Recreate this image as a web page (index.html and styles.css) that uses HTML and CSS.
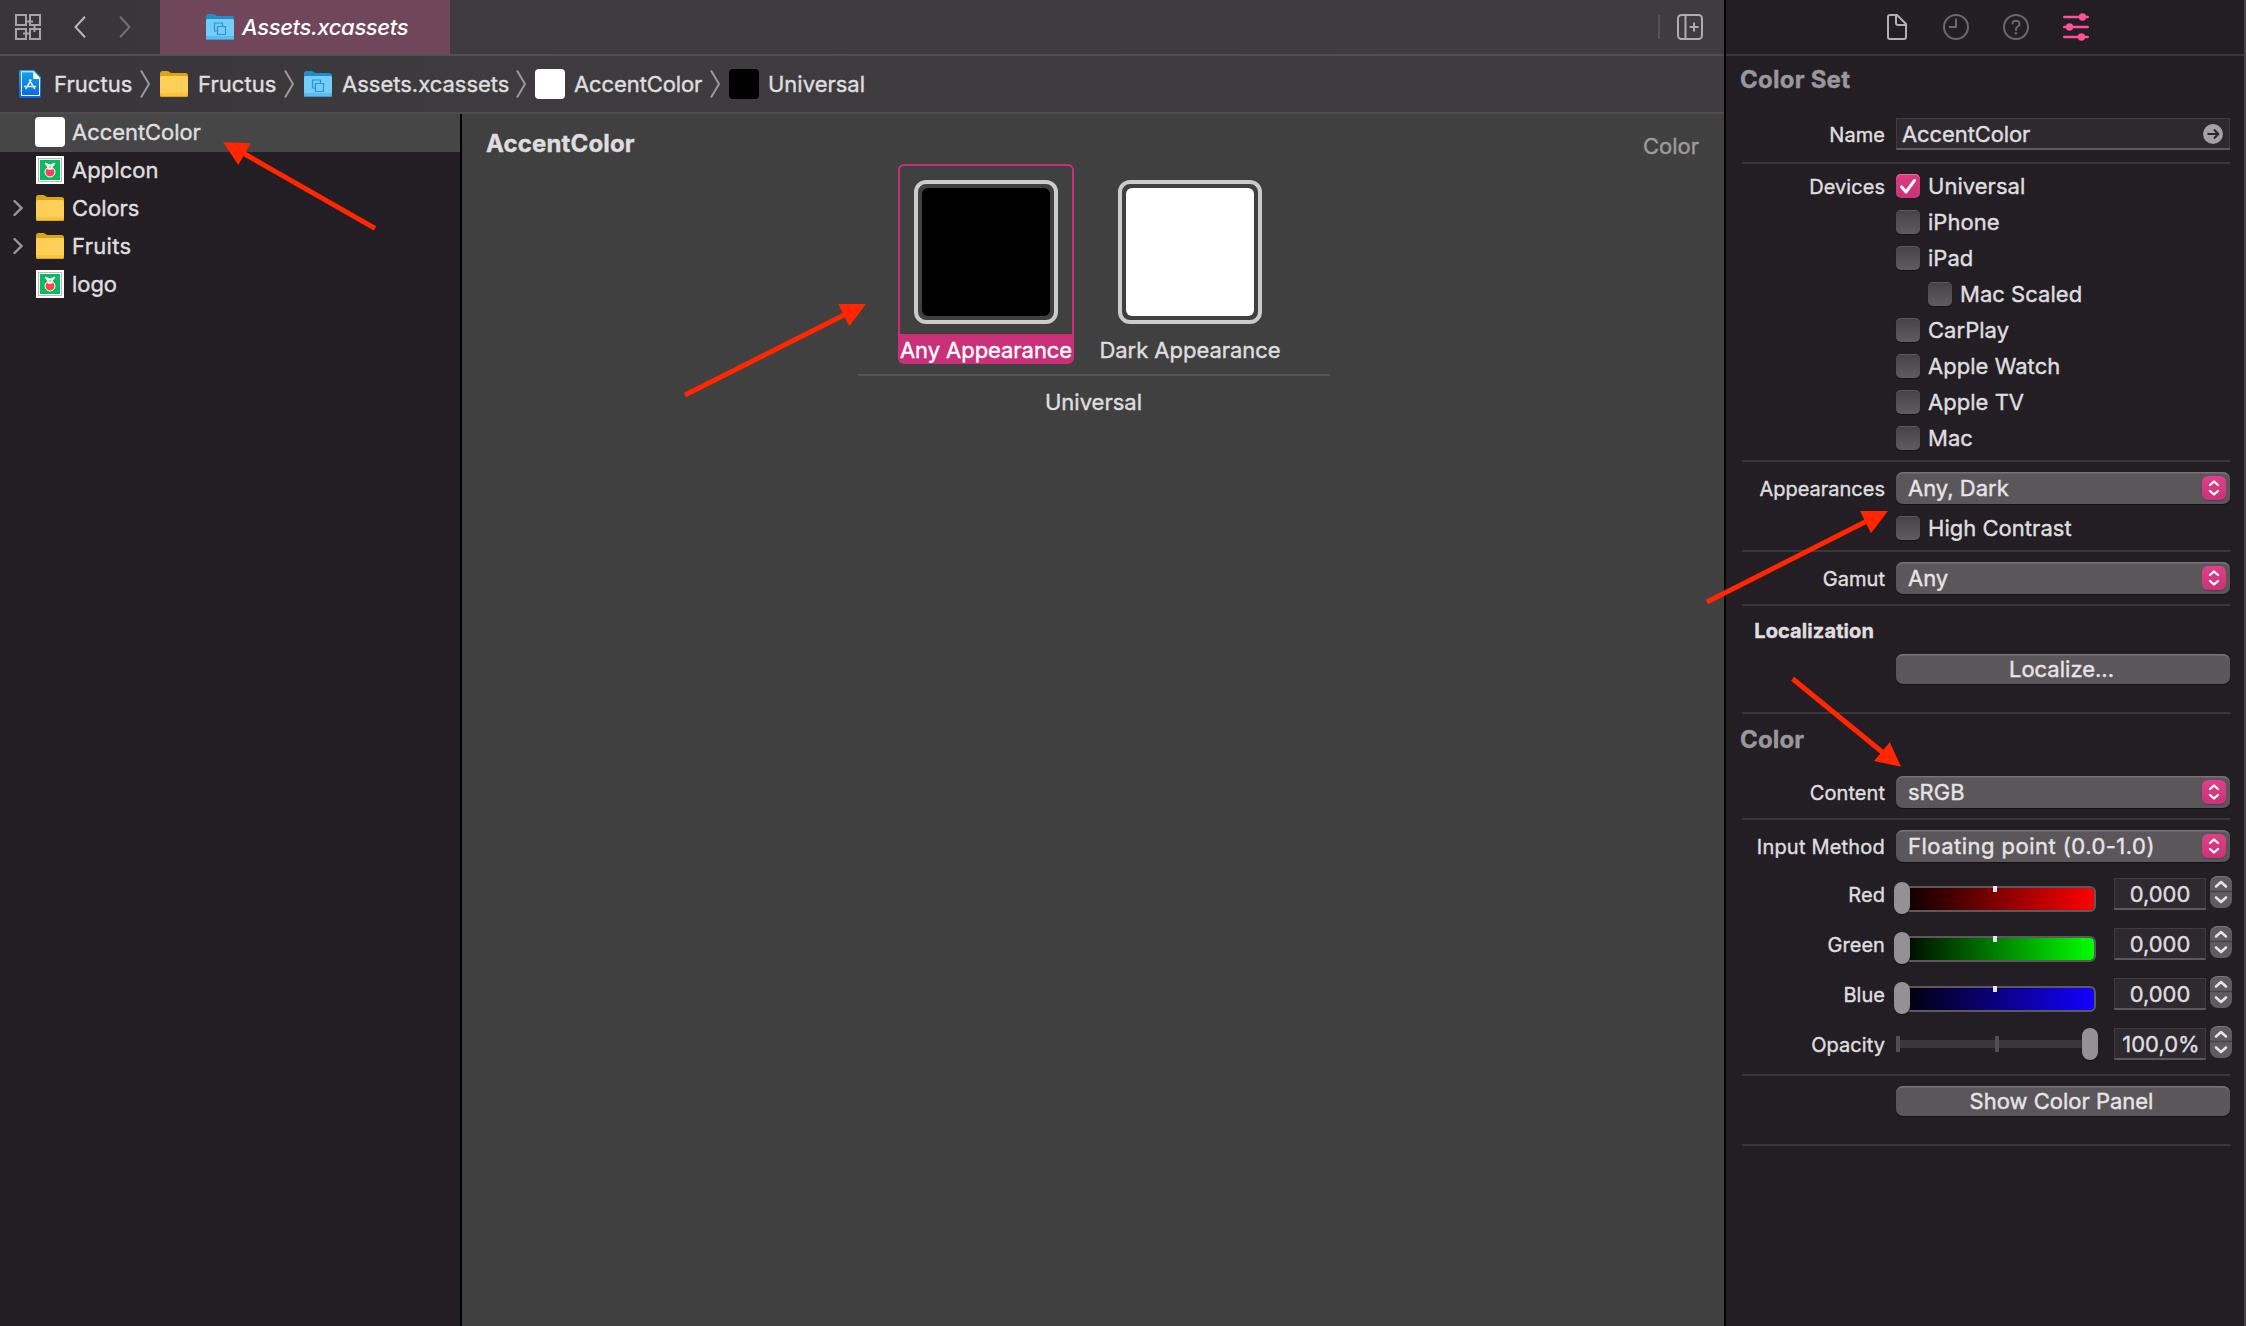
FILE: index.html
```html
<!DOCTYPE html>
<html lang="en">
<head>
<meta charset="utf-8">
<title>Assets.xcassets</title>
<link rel="stylesheet" href="styles.css">
</head>
<body>
<svg class="sprite" width="0" height="0" aria-hidden="true">
  <defs>
    <linearGradient id="gBlue" x1="0" y1="0" x2="0" y2="1"><stop offset="0" stop-color="#18a4ec"/><stop offset="1" stop-color="#0a63e4"/></linearGradient>
  </defs>
  <symbol id="folder" viewBox="0 0 28 28">
    <path d="M0 3.500Q0 1 2.500 1H7Q8.500 1 9.500 2T12 3H25.500Q28 3 28 5.500V12H0Z" fill="#d9a416"/>
    <path d="M0 7.500Q0 6 1.500 6H26.500Q28 6 28 7.500V24.500Q28 27 25.500 27H2.500Q0 27 0 24.500Z" fill="#fecf56"/>
    <path d="M0 23H28V24.500Q28 27 25.500 27H2.500Q0 27 0 24.500Z" fill="#fac235"/>
    <path d="M0 24.500Q0 27 2.500 27H25.500Q28 27 28 24.500Q28 26 25.500 26H2.500Q0 26 0 24.500Z" fill="#d9a32a"/>
  </symbol>
  <symbol id="assets" viewBox="0 0 28 28">
    <path d="M0 3.500Q0 1 2.500 1H7Q8.500 1 9.500 2T12 3H25.500Q28 3 28 5.500V12H0Z" fill="#1f8fcb"/>
    <path d="M0 7.500Q0 6 1.500 6H26.500Q28 6 28 7.500V24.500Q28 27 25.500 27H2.500Q0 27 0 24.500Z" fill="#74cdfa"/>
    <path d="M0 23H28V24.500Q28 27 25.500 27H2.500Q0 27 0 24.500Z" fill="#5dbdf2"/>
    <path d="M0 24.500Q0 27 2.500 27H25.500Q28 27 28 24.500Q28 26 25.500 26H2.500Q0 26 0 24.500Z" fill="#3c9bd0"/>
    <path d="M11.500 18H8.500V10H16.500V13M11.500 13.500H19.500V21.500H11.500Z" fill="none" stroke="#2f93cb" stroke-width="1.200"/>
  </symbol>
  <symbol id="fruit" viewBox="0 0 28 28">
    <path d="M0 0H28V28H0Z" fill="#fff"/>
    <path d="M2.500 2.500H25.500V25.500H2.500Z" fill="#fff" stroke="#b9b9b9" stroke-width="1"/>
    <path d="M4 4H24V24H4Z" fill="#08bb5c"/>
    <path d="M14 13L9.500 7.500L14 9.500L18.500 7.500Z" fill="#08bb5c" stroke="#fff" stroke-width="1.500" stroke-linejoin="round"/>
    <circle cx="14" cy="16" r="5" fill="#fb4258" stroke="#fff" stroke-width="1"/>
    <path d="M10.500 13Q14 10.500 17.500 13L14 14Z" fill="#fff"/>
  </symbol>
  <symbol id="sep" viewBox="0 0 10 28">
    <path d="M1 .5L9 14L1 27.500" fill="none" stroke="#9b989b" stroke-width="2"/>
  </symbol>
  <symbol id="disclose" viewBox="0 0 10 18">
    <path d="M1.500 2L8.500 9L1.500 16" fill="none" stroke="#9a979b" stroke-width="2.400" stroke-linecap="round"/>
  </symbol>
  <symbol id="updown" viewBox="0 0 24 24">
    <path d="M8 9L12 5.500L16 9M8 15L12 18.500L16 15" fill="none" stroke="#fff" stroke-width="2.300" stroke-linecap="round" stroke-linejoin="round"/>
  </symbol>
  <symbol id="step" viewBox="0 0 22 32">
    <path d="M0 15.500H22" stroke="#454146" stroke-width="1.500"/>
    <path d="M6 10.500L11 6L16 10.500M6 21.500L11 26L16 21.500" fill="none" stroke="#e4e2e4" stroke-width="2.600" stroke-linecap="round" stroke-linejoin="round"/>
  </symbol>
</svg>

<div class="window">
  <main class="editor">
    <header class="tabbar">
      <svg class="ic-grid" width="26" height="26" viewBox="0 0 26 26" fill="none" stroke="#a7a4a7" stroke-width="2"><path d="M1 1H11V11H1ZM15 1H25V11H15ZM1 15H11V25H1ZM15 15H25V25H15ZM11 7.500H18M8 19.500H15M19.500 11V18"/></svg>
      <svg class="ic-back" width="12" height="22" viewBox="0 0 12 22" fill="none" stroke="#bab7ba" stroke-width="2"><path d="M11 .8L1.500 11L11 21.200"/></svg>
      <svg class="ic-fwd" width="12" height="22" viewBox="0 0 12 22" fill="none" stroke="#716e71" stroke-width="2"><path d="M1 .8L10.500 11L1 21.200"/></svg>
      <div class="tab"><svg width="28" height="28"><use href="#assets"/></svg><span>Assets.xcassets</span></div>
      <i class="vsep"></i>
      <svg class="ic-split" width="26" height="26" viewBox="0 0 26 26" fill="none" stroke="#b0adb0" stroke-width="2"><rect x="1" y="1" width="24" height="24" rx="3.500"/><path d="M8.500 1V25M12.500 13H21.500M17 8.500V17.500"/></svg>
    </header>
    <nav class="crumbs">
      <div class="crumb c1">
        <svg width="28" height="28" viewBox="0 0 28 28"><path d="M3 1.500Q3 0 4.500 0H18L25 7V26.500Q25 28 23.500 28H4.500Q3 28 3 26.500Z" fill="url(#gBlue)"/><path d="M18 1.500V8.500H23.500V25.500H5.500V1.800H17" fill="none" stroke="#fff" stroke-width="1"/><path d="M17.500 1L24.500 8.500H17.500Z" fill="#fff"/><path d="M15 10L10 18.500M13.500 10L18.500 18.500M8.500 16.500H19.500" fill="none" stroke="#d9efff" stroke-width="1.600" stroke-linecap="round"/></svg>
        <span>Fructus</span><svg class="sep" width="10" height="28"><use href="#sep"/></svg>
      </div>
      <div class="crumb c1"><svg width="28" height="28"><use href="#folder"/></svg><span>Fructus</span><svg class="sep" width="10" height="28"><use href="#sep"/></svg></div>
      <div class="crumb c3"><svg width="28" height="28"><use href="#assets"/></svg><span>Assets.xcassets</span><svg class="sep" width="10" height="28"><use href="#sep"/></svg></div>
      <div class="crumb c4"><i class="chip white"></i><span>AccentColor</span><svg class="sep" width="10" height="28"><use href="#sep"/></svg></div>
      <div class="crumb c5"><i class="chip black"></i><span>Universal</span></div>
    </nav>
    <div class="split">
      <aside class="outline">
        <div class="item selected"><i class="twist"></i><i class="chip white"></i><span>AccentColor</span></div>
        <div class="item"><i class="twist"></i><svg class="thumb" width="28" height="28"><use href="#fruit"/></svg><span>AppIcon</span></div>
        <div class="item"><svg class="twist" width="10" height="18"><use href="#disclose"/></svg><svg class="thumb" width="28" height="28"><use href="#folder"/></svg><span>Colors</span></div>
        <div class="item"><svg class="twist" width="10" height="18"><use href="#disclose"/></svg><svg class="thumb" width="28" height="28"><use href="#folder"/></svg><span class="fruits">Fruits</span></div>
        <div class="item"><i class="twist"></i><svg class="thumb" width="28" height="28"><use href="#fruit"/></svg><span>logo</span></div>
      </aside>
      <section class="canvas">
        <div class="canvas-head"><h1>AccentColor</h1><span class="kind">Color</span></div>
        <div class="set">
          <div class="wells">
            <div class="well active"><div class="frame"><i class="fill black"></i></div><span class="cap">Any Appearance</span></div>
            <div class="well"><div class="frame"><i class="fill white"></i></div><span class="cap">Dark Appearance</span></div>
          </div>
          <div class="set-name">Universal</div>
        </div>
      </section>
    </div>
  </main>

  <aside class="inspector">
    <header class="modes">
      <svg width="20" height="26" viewBox="0 0 20 26" fill="none" stroke="#b3b0b4" stroke-width="2" stroke-linejoin="round"><path d="M1 3Q1 1 3 1H10L19 10V23Q19 25 17 25H3Q1 25 1 23ZM9 1V9Q9 11 11 11H19"/></svg>
      <svg class="m2" width="26" height="26" viewBox="0 0 26 26" fill="none" stroke="#6b676c" stroke-width="2"><circle cx="13" cy="13" r="12"/><path d="M13 4.500V13H6"/></svg>
      <svg class="m3" width="26" height="26" viewBox="0 0 26 26" fill="none" stroke="#6b676c" stroke-width="2"><circle cx="13" cy="13" r="12"/><path d="M9.500 9.500Q9.800 6.700 13 6.700T16.600 9.800Q16.600 11.500 14.800 12.500T13 15.500V16" stroke-linecap="round"/><circle cx="13" cy="19.300" r="1.300" fill="#6b676c" stroke="none"/></svg>
      <svg class="m3" width="26" height="28" viewBox="0 0 26 28" fill="#ff4f9d" stroke="#ff4f9d" stroke-width="2.600" stroke-linecap="round"><path d="M1.300 4H24.700M1.300 14H24.700M1.300 24H24.700"/><g stroke="none"><circle cx="19.500" cy="4" r="3.700"/><circle cx="6.500" cy="14" r="3.700"/><circle cx="18.500" cy="24" r="3.700"/></g></svg>
    </header>
    <div class="form">
      <h2>Color Set</h2>
      <div class="row"><label>Name</label><div class="field name"><span>AccentColor</span><svg width="20" height="20" viewBox="0 0 20 20"><circle cx="10" cy="10" r="10" fill="#a5a2a6"/><path d="M4.500 10H15M11 5.500L15.300 10L11 14.500" fill="none" stroke="#29252b" stroke-width="2"/></svg></div></div>
      <hr class="h12">
      <div class="row top"><label class="l24">Devices</label>
        <div class="checks">
          <div class="check"><i class="box on"><svg width="24" height="24" viewBox="0 0 24 24"><path d="M5.500 12.800L10 18L18.500 6.500" fill="none" stroke="#fff" stroke-width="3" stroke-linecap="round" stroke-linejoin="round"/></svg></i><span>Universal</span></div>
          <div class="check"><i class="box"></i><span>iPhone</span></div>
          <div class="check"><i class="box"></i><span>iPad</span></div>
          <div class="check sub"><i class="box"></i><span>Mac Scaled</span></div>
          <div class="check"><i class="box"></i><span>CarPlay</span></div>
          <div class="check"><i class="box"></i><span>Apple Watch</span></div>
          <div class="check"><i class="box"></i><span>Apple TV</span></div>
          <div class="check"><i class="box"></i><span>Mac</span></div>
        </div>
      </div>
      <hr>
      <div class="row top"><label class="l32">Appearances</label>
        <div class="checks">
          <div class="popup"><span>Any, Dark</span><i><svg width="24" height="24"><use href="#updown"/></svg></i></div>
          <div class="check"><i class="box"></i><span>High Contrast</span></div>
        </div>
      </div>
      <hr>
      <div class="row"><label>Gamut</label><div class="popup"><span>Any</span><i><svg width="24" height="24"><use href="#updown"/></svg></i></div></div>
      <hr class="flush">
      <div class="row loc"><label>Localization</label></div>
      <div class="row"><label></label><div class="button">Localize...</div></div>
      <hr class="h28 flush">
      <h2 class="second">Color</h2>
      <div class="row"><label>Content</label><div class="popup"><span>sRGB</span><i><svg width="24" height="24"><use href="#updown"/></svg></i></div></div>
      <hr>
      <div class="row"><label class="im">Input Method</label><div class="popup"><span class="wide">Floating point (0.0-1.0)</span><i><svg width="24" height="24"><use href="#updown"/></svg></i></div></div>
      <div class="channels">
        <div class="row"><label>Red</label><div class="channel"><div class="slider red"><i class="tick"></i><i class="knob"></i></div><div class="field num">0,000</div><svg class="stepper" width="22" height="32"><use href="#step"/></svg></div></div>
        <div class="row"><label>Green</label><div class="channel"><div class="slider green"><i class="tick"></i><i class="knob"></i></div><div class="field num">0,000</div><svg class="stepper" width="22" height="32"><use href="#step"/></svg></div></div>
        <div class="row"><label>Blue</label><div class="channel"><div class="slider blue"><i class="tick"></i><i class="knob"></i></div><div class="field num">0,000</div><svg class="stepper" width="22" height="32"><use href="#step"/></svg></div></div>
        <div class="row"><label>Opacity</label><div class="channel"><div class="slider alpha"><i class="tick t0"></i><i class="tick t1"></i><i class="knob"></i></div><div class="field num pct">100,0%</div><svg class="stepper" width="22" height="32"><use href="#step"/></svg></div></div>
      </div>
      <hr class="h14">
      <div class="row"><label></label><div class="button">Show Color Panel</div></div>
      <hr class="h28">
    </div>
  </aside>

  <svg class="arrows" width="2246" height="1326" viewBox="0 0 2246 1326" fill="#ff2600" stroke="none">
    <path d="M375 228.300L242 152.500M685 395L846 314M1707 602L1867 521M1792.600 678.700L1884 753.500" stroke="#ff2600" stroke-width="5"/>
    <path d="M223 142.300L250.700 143.300L238.300 165ZM866 304L838.300 304L849.300 326.300ZM1888 511L1860 511L1871 533.300ZM1901 766.700L1889.800 742.300L1874 761Z"/>
  </svg>
</div>
</body>
</html>
```
FILE: styles.css
```css
* { box-sizing: border-box; }
body {
  margin: 0;
  background: #221e24;
  color: #dfdddf;
  font: 400 22px/30px Inter, "Liberation Sans", sans-serif;
  -webkit-text-stroke: .4px;
  overflow: hidden;
}
svg { display: block; flex: none; }
i { display: block; flex: none; }
span { white-space: nowrap; }
.sprite { position: absolute; }
.window { position: relative; display: flex; width: 2246px; height: 1326px; }

/* editor */
.editor { display: flex; flex-direction: column; width: 1726px; border-right: 2px solid #000; }
.tabbar {
  display: flex; align-items: center; height: 56px; padding-left: 15px;
  background: linear-gradient(90deg, #38343a, #3d3b3d 460px, #3f3c3f);
  border-bottom: 2px solid #524e52;
}
.ic-back { margin-left: 33px; }
.ic-fwd { margin-left: 33px; }
.tab {
  display: flex; align-items: center; width: 290px; height: 54px; margin-left: 29px; padding-left: 46px;
  background: #70475a; color: #fff; font-style: italic; font-weight: 500; letter-spacing: -.35px;
  -webkit-text-stroke: 0;
}
.tab span { margin-left: 8px; }
.vsep { width: 2px; height: 24px; margin-left: auto; background: #545154; }
.ic-split { margin: 0 21px 0 17px; }

.crumbs {
  display: flex; align-items: center; height: 58px; padding-left: 16px;
  background: linear-gradient(90deg, #38343a, #3d3b3e 460px, #3f3c3f);
  border-bottom: 2px solid #514b50;
}
.crumb { display: flex; align-items: center; }
.crumb span { margin-left: 10px; letter-spacing: .05px; }
.crumb .sep { margin: 0 10px 0 auto; }
.c1 { width: 144px; }
.c3 { width: 231px; }
.crumb.c3 span { letter-spacing: 0; }
.crumb.c3 .sep, .crumb.c4 .sep { margin-right: 9px; }
.c4 { width: 194px; }
.crumb.c4 span { margin-left: 9px; letter-spacing: -.1px; }
.crumb.c5 span { margin-left: 9px; letter-spacing: 0; }

.chip { width: 30px; height: 30px; border-radius: 4px; }
.white { background: #fff; }
.black { background: #000; }

.split { display: flex; flex: 1; }
.outline { width: 462px; background: #221e24; border-right: 2px solid #000; }
.item { display: flex; align-items: center; height: 38px; padding: 0 0 2px 13px; }
.item.selected { background: #464646; }
.twist { width: 10px; }
.item .chip { margin: 0 7px 0 12px; }
.thumb { margin: 0 8px 0 13px; }
.item span { letter-spacing: -.05px; }
.item .fruits { letter-spacing: .3px; }

.canvas { flex: 1; background: #404040; }
.canvas-head { display: flex; justify-content: space-between; height: 50px; padding: 15px 25px 0 24px; }
h1 { margin: 0; font-size: 24px; line-height: 30px; font-weight: 700; letter-spacing: .15px; }
.kind { padding-top: 2px; color: #9c9c9c; }
.set { width: 472px; margin-left: 396px; }
.wells { display: flex; gap: 24px; height: 212px; padding-left: 40px; border-bottom: 2px solid #555; }
.well {
  display: flex; flex-direction: column; align-items: center; width: 184px; height: 200px;
  border: 2px solid transparent; border-radius: 6px; padding-top: 14px;
}
.well.active { width: 176px; border-color: #c93079; color: #fff; }
.frame { width: 144px; height: 144px; padding: 4px; border: 4px solid #ccc; border-radius: 12px; }
.fill { height: 128px; border-radius: 6px; }
.cap { margin-top: 10px; height: 30px; padding-top: 1px; letter-spacing: -.03px; }
.active .cap { align-self: stretch; height: 28px; text-align: center; background: #c93079; letter-spacing: -.05px; margin-left: -1px; margin-right: -1px; }
.set-name { padding: 11px 1px 0 0; text-align: center; }

/* inspector */
.inspector { width: 520px; border-right: 2px solid #48444a; background: #221e24; }
.modes { display: flex; align-items: center; height: 56px; padding-left: 161px; border-bottom: 2px solid #3a363b; }
.m2 { margin-left: 36px; }
.m3 { margin-left: 34px; }
.form { padding: 0 14px 0 16px; }
h2 { margin: 0 0 0 -2px; height: 62px; padding-top: 9px; font-size: 24px; line-height: 30px; font-weight: 700; letter-spacing: .25px; color: #9a979b; }
h2.second { padding-top: 11px; letter-spacing: .15px; }
hr { height: 2px; margin: 10px 0; border: 0; background: #3a363b; }
hr.h12 { margin-top: 12px; }
hr.h14 { margin-top: 14px; }
hr.h28 { margin-top: 28px; }
hr.flush { margin-bottom: 0; }
.row { display: grid; grid-template-columns: 143px 334px; column-gap: 11px; align-items: center; }
.row.top { align-items: start; }
label { font-size: 20px; text-align: right; white-space: nowrap; padding-top: 1px; letter-spacing: .05px; }
.l24 { line-height: 24px; }
.l32 { line-height: 32px; letter-spacing: 0; }
.im { letter-spacing: .2px; }
.field {
  display: flex; align-items: center; height: 32px;
  background: #2d292f; border: 1px solid #3f3b41; border-bottom: 2px solid #5c585d;
}
.name { justify-content: space-between; padding: 0 6px 0 5px; }
.name span { letter-spacing: -.1px; }
.checks { display: flex; flex-direction: column; gap: 12px; }
.check { display: flex; align-items: center; height: 24px; gap: 8px; }
.check span { letter-spacing: .03px; }
.sub { padding-left: 32px; }
.box { width: 24px; height: 24px; border-radius: 5px; background: linear-gradient(#454147, #5f5b60); box-shadow: inset 0 1px #5b575c, 0 1px 1px #151217; }
.box.on { background: linear-gradient(#dc3b83, #c93377); box-shadow: inset 0 1px #e56ba1; }
.popup, .button {
  display: flex; align-items: center; height: 32px; border-radius: 7px;
  background: #5b565a; box-shadow: inset 0 1.500px #777276, 0 1px 1px #141116; color: #e6e4e6;
}
.popup { justify-content: space-between; padding: 0 4px 0 12px; }
.popup i { border-radius: 6px; background: linear-gradient(#e04089, #c93377); box-shadow: 0 1px 1px #47334099; }
.wide { letter-spacing: .48px; }
.button { height: 30px; justify-content: center; padding-right: 3px; }
.loc { height: 48px; }
.loc label { padding: 2px 11px 0 0; font-weight: 700; letter-spacing: .1px; }
.channels { display: flex; flex-direction: column; gap: 18px; padding-top: 16px; }
.channel { display: flex; align-items: center; height: 32px; }
.slider { position: relative; width: 200px; height: 26px; margin: 2px 18px 0 0; border: 2px solid #5c585c; border-radius: 6px; }
.red { background: linear-gradient(90deg, #000, #f00) padding-box; }
.green { background: linear-gradient(90deg, #000, #0f0) padding-box; }
.blue { background: linear-gradient(90deg, #000, #1400ff) padding-box; }
.tick { position: absolute; left: 95px; top: -2px; width: 4px; height: 6px; background: #e9e6f0; }
.knob { position: absolute; left: -4px; top: -6px; width: 16px; height: 32px; border-radius: 8px; background: #949195; box-shadow: 0 1px 1px #161317; }
.red, .green, .blue { top: 4px; }
.alpha { height: 8px; margin-top: 0; border: 0; border-radius: 0; background: #3a363b; }
.alpha .tick { left: 99px; top: -4px; height: 16px; background: #524e54; }
.alpha .t0 { left: 0; }
.alpha .knob { left: 186px; top: -12px; }
.num { width: 92px; justify-content: center; }
.pct { padding-left: 2px; }
.stepper { margin: -4px -2px 0 4px; border-radius: 8px; background: #5f5b60; box-shadow: inset 0 1px #77747a; }

.arrows { position: absolute; left: 0; top: 0; pointer-events: none; }
```
